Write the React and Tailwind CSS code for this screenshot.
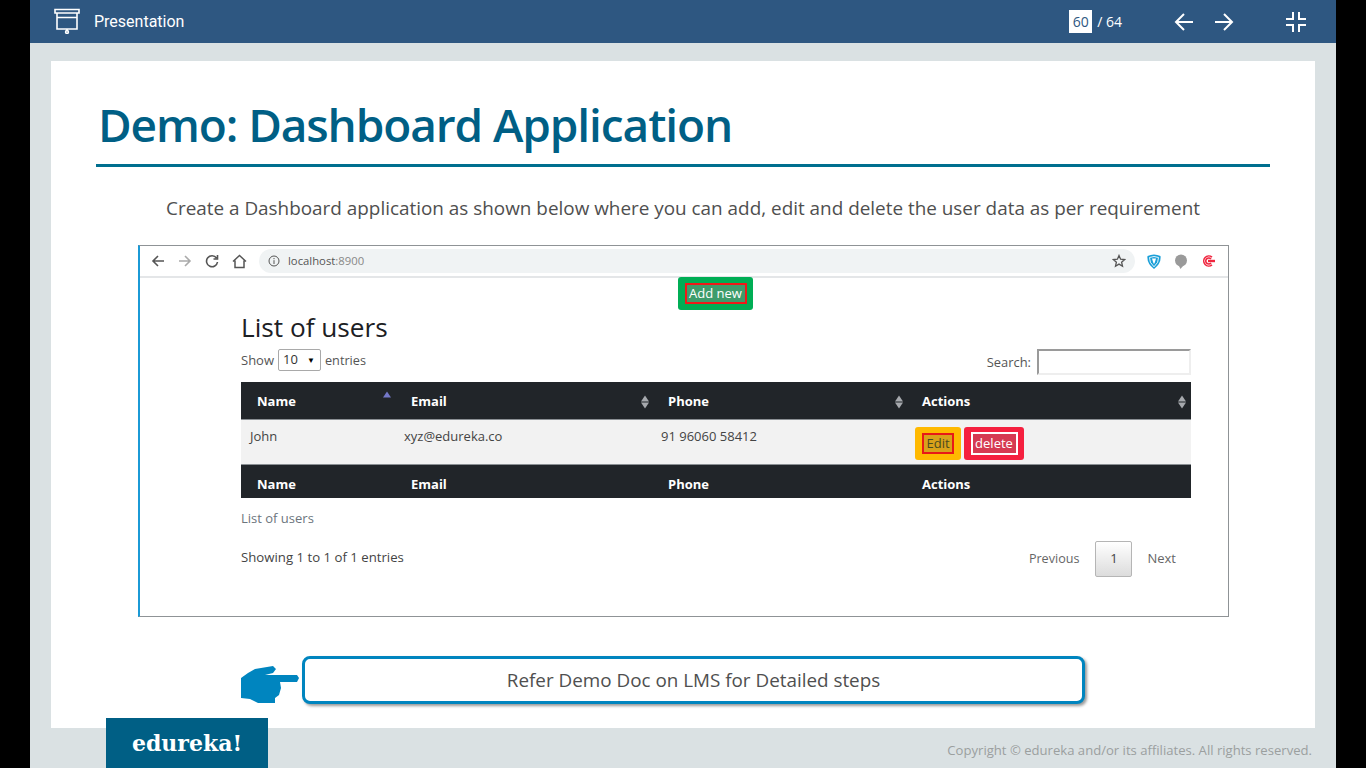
import React from "react";

const Sort = ({ active }) => (
  <svg width="8" height="14" viewBox="0 0 8 14" className="shrink-0">
    <path d="M4 0.5L8 6.4H0z" fill={active ? "#7478c8" : "#a6a9ad"} />
    {!active && <path d="M4 13.5L0 7.6H8z" fill="#a6a9ad" />}
  </svg>
);

const columns = "grid grid-cols-[154px_257px_254px_285px]";

const App = () => {
  return (
    <div className="w-[1366px] h-[768px] overflow-hidden bg-black px-[30px] font-['Open_Sans',sans-serif]">
      <div className="relative flex h-full flex-col bg-[#dae1e3]">
        {/* top bar */}
        <header className="flex h-[43px] shrink-0 items-center bg-[#2e5781] text-white">
          <svg width="26" height="26" viewBox="0 0 26 26" className="ml-[24px] mb-[2px]" fill="none" stroke="#fff" strokeWidth="1.6">
            <path d="M1 1.5H25V5H1z" />
            <path d="M3 5V21H23V5M3 9.5H23" />
            <path d="M13 21V23" />
            <circle cx="13" cy="24" r="1.4" />
          </svg>
          <span className="ml-[14px] font-['Roboto',sans-serif] text-[16px]">Presentation</span>
          <div className="ml-auto flex items-center">
            <span className="flex h-[23px] w-[23px] items-center justify-center bg-white text-[14px] text-[#2e5781]">60</span>
            <span className="ml-[5px] text-[14px]">/ 64</span>
            <svg width="20" height="20" viewBox="0 0 20 20" className="ml-[52px]" fill="none" stroke="#fff" strokeWidth="2">
              <path d="M19 10H2M10 2L2 10L10 18" />
            </svg>
            <svg width="20" height="20" viewBox="0 0 20 20" className="ml-[20px]" fill="none" stroke="#fff" strokeWidth="2">
              <path d="M1 10H18M10 2L18 10L10 18" />
            </svg>
            <svg width="22" height="22" viewBox="0 0 22 22" className="ml-[51px] mr-[29px]" fill="none" stroke="#fff" strokeWidth="2">
              <path d="M8 1V8H1M14 1V8H21M8 21V14H1M14 21V14H21" />
            </svg>
          </div>
        </header>

        {/* slide */}
        <main className="mx-[21px] mt-[18px] h-[667px] shrink-0 bg-white">
          <div className="mx-[45px] h-[106px] border-b-[3px] border-[#006f8f] pl-[2px] pt-[32px]">
            <h1 className="text-[46px] font-semibold leading-[62px] tracking-[-1.1px] text-[#005f85]">Demo: Dashboard Application</h1>
          </div>
          <p className="mt-[28px] text-center text-[18.9px] leading-[26px] text-[#4f4f4f]">
            Create a Dashboard application as shown below where you can add, edit and delete the user data as per requirement
          </p>

          {/* browser capture */}
          <div className="ml-[87px] mt-[24px] h-[372px] w-[1091px] border border-l-2 border-[#8f9396] border-l-[#1b9ad6]">
            <div className="flex h-[32px] items-center border-b-2 border-[#e4e6e8]">
              <svg width="14" height="14" viewBox="0 0 14 14" className="ml-[11px]" fill="none" stroke="#555" strokeWidth="1.6">
                <path d="M13 7H2M7 2L2 7L7 12" />
              </svg>
              <svg width="14" height="14" viewBox="0 0 14 14" className="ml-[13px]" fill="none" stroke="#aaa" strokeWidth="1.6">
                <path d="M1 7H12M7 2L12 7L7 12" />
              </svg>
              <svg width="14" height="14" viewBox="0 0 14 14" className="ml-[13px]" fill="none" stroke="#555" strokeWidth="1.6">
                <path d="M11.5 4A5.5 5.5 0 1 0 12.5 8M12.5 1V5H8.5" />
              </svg>
              <svg width="15" height="15" viewBox="0 0 15 15" className="ml-[13px]" fill="none" stroke="#555" strokeWidth="1.5">
                <path d="M1 7.5L7.5 1.5L14 7.5M3 6.5V13.5H12V6.5" />
              </svg>
              <div className="ml-[12px] flex h-[24px] w-[876px] items-center rounded-full bg-[#f0f3f4]">
                <svg width="12" height="12" viewBox="0 0 12 12" className="ml-[9px]" fill="none" stroke="#555" strokeWidth="1">
                  <circle cx="6" cy="6" r="5" />
                  <path d="M6 5.2V9M6 3V4.2" />
                </svg>
                <span className="ml-[8px] text-[11.3px] text-[#555]">
                  localhost<span className="text-[#888]">:8900</span>
                </span>
                <svg width="14" height="14" viewBox="0 0 14 14" className="ml-auto mr-[9px]" fill="none" stroke="#555" strokeWidth="1.3">
                  <path d="M7 1.5L8.6 5.2L12.6 5.6L9.6 8.2L10.5 12.2L7 10.1L3.5 12.2L4.4 8.2L1.4 5.6L5.4 5.2z" />
                </svg>
              </div>
              <svg width="14" height="15" viewBox="0 0 14 15" className="ml-[12px]">
                <path d="M0.5 2Q7 -1 13.5 2Q14.5 9 7 15Q-0.5 9 0.5 2z" fill="#1a9fd8" />
                <path d="M2.5 3.5Q7 1.5 11.5 3.5Q12 8.5 7 12.8Q2 8.5 2.5 3.5z" fill="none" stroke="#fff" strokeWidth="0.9" />
                <path d="M5 4.5H9L7.5 9.5H6.5z" fill="#fff" />
              </svg>
              <svg width="12" height="15" viewBox="0 0 12 15" className="ml-[14px]">
                <circle cx="6" cy="6.5" r="6" fill="#9a9a9a" />
                <path d="M4 12L5.5 15L8 12z" fill="#9a9a9a" />
              </svg>
              <svg width="13" height="12" viewBox="0 0 13 12" className="ml-[15px]" fill="none" stroke="#f0263f" strokeWidth="1.6">
                <path d="M10 2.2A5 5 0 1 0 10 9.8" />
                <path d="M9 4A3 3 0 1 0 9 8" />
                <path d="M6 6H13" strokeWidth="2.4" />
              </svg>
            </div>

            <div className="mt-[-1px] flex pl-[538px]">
              <button className="flex h-[33px] w-[75px] items-center justify-center rounded-[3px] bg-[#00ae55]">
                <span className="flex h-[21px] w-[62px] items-center justify-center border-2 border-[#f01818] bg-[#3d9c6b] text-[13px] text-white">Add new</span>
              </button>
            </div>

            <div className="ml-[101px] w-[950px]">
              <h2 className="text-[26.2px] font-medium leading-[34px] text-[#1c2024]">List of users</h2>
              <div className="flex h-[38px] items-start justify-between pt-[5px] text-[13px] text-[#555]">
                <div className="flex h-[22px] items-center">
                  <span className="mt-[2px]">Show</span>
                  <span className="mx-[4px] flex h-[22px] w-[43px] items-center justify-between rounded-[2px] border border-[#a9a9a9] pl-[4px] pr-[5px] text-[#333]">
                    10
                    <span className="text-[8px] text-black">▼</span>
                  </span>
                  <span className="mt-[2px] text-[12.7px]">entries</span>
                </div>
                <div className="flex items-center">
                  <span className="ml-[1px] mt-[2px] text-[12.9px]">Search:</span>
                  <span className="ml-[6px] h-[26px] w-[154px] border-2 border-[#9a9a9a] border-b-[#eee] border-r-[#eee]"></span>
                </div>
              </div>

              <div className={`${columns} h-[37px] bg-[#212529] pt-[2px] text-[13px] font-bold text-white`}>
                <div className="flex items-center justify-between pl-[16px] pr-[4px]">Name<span className="mb-[8px]"><Sort active /></span></div>
                <div className="flex items-center justify-between pl-[16px] pr-[3px]">Email<Sort /></div>
                <div className="flex items-center justify-between pl-[16px] pr-[3px]">Phone<Sort /></div>
                <div className="flex items-center justify-between pl-[16px] pr-[5px]">Actions<Sort /></div>
              </div>
              <div className={`${columns} h-[46px] border-y border-[#8a8f93] bg-[#f2f2f2] text-[13px] text-[#444]`}>
                <div className="pl-[9px] pt-[7px]">John</div>
                <div className="pl-[9px] pt-[7px]">xyz@edureka.co</div>
                <div className="pl-[9px] pt-[7px]">91 96060 58412</div>
                <div className="flex items-start gap-[3px] pl-[9px] pt-[7px]">
                  <button className="flex h-[33px] w-[46px] items-center justify-center rounded-[3px] bg-[#ffb900]">
                    <span className="flex h-[21px] w-[32px] items-center justify-center border-2 border-[#e81818] bg-[#d9a21a] text-[13px] text-[#4a4a20]">Edit</span>
                  </button>
                  <button className="flex h-[33px] w-[60px] items-center justify-center rounded-[3px] bg-[#f5203f]">
                    <span className="flex h-[23px] w-[47px] items-center justify-center border-2 border-white bg-[#d63a52] text-[13px] text-white">delete</span>
                  </button>
                </div>
              </div>
              <div className={`${columns} h-[33px] items-center bg-[#212529] pt-[7px] text-[13px] font-bold text-white`}>
                <div className="pl-[16px]">Name</div>
                <div className="pl-[16px]">Email</div>
                <div className="pl-[16px]">Phone</div>
                <div className="pl-[16px]">Actions</div>
              </div>

              <p className="mt-[11px] text-[13px] leading-[18px] text-[#6c757d]">List of users</p>
              <div className="mt-[14px] flex items-start justify-between text-[13px] text-[#444]">
                <span className="mt-[7px] text-[13.2px] leading-[18px]">Showing 1 to 1 of 1 entries</span>
                <div className="flex items-center pr-[15px] text-[#666]">
                  <span className="text-[12.6px]">Previous</span>
                  <span className="ml-[16px] flex h-[36px] w-[37px] items-center justify-center rounded-[2px] border border-[#b5b5b5] bg-linear-to-b from-white to-[#dcdcdc] text-[#444]">1</span>
                  <span className="ml-[15px]">Next</span>
                </div>
              </div>
            </div>
          </div>

          {/* callout */}
          <div className="ml-[190px] mt-[39px] flex items-center">
            <svg width="58" height="38" viewBox="0 0 58 38" className="mt-[10px]" fill="#0085bf">
              <path d="M0 12L7 7L14 3L32 0L35 3L32 7L24 9H56L58 12L56 16H39L40 22L38 29L34 32L34 37L17 37L9 33L0 32z" />
            </svg>
            <div className="ml-[3px] flex h-[48px] w-[783px] items-center justify-center rounded-[8px] border-[3px] border-[#0085bf] bg-white text-[18.85px] text-[#4f4f4f] shadow-[2px_2px_3px_rgba(0,0,0,0.4)]">
              Refer Demo Doc on LMS for Detailed steps
            </div>
          </div>
        </main>

        {/* footer */}
        <footer className="flex flex-1 justify-end pr-[24px] pt-[13px] text-[13.1px] leading-[18px] text-[#9b9f9f]">
          Copyright © edureka and/or its affiliates. All rights reserved.
        </footer>
        <div className="absolute bottom-0 left-[76px] flex h-[50px] w-[162px] items-center justify-center bg-[#005f85] font-['DejaVu_Serif',serif] text-[22px] font-bold text-white">
          edureka!
        </div>
      </div>
    </div>
  );
};

export default App;
